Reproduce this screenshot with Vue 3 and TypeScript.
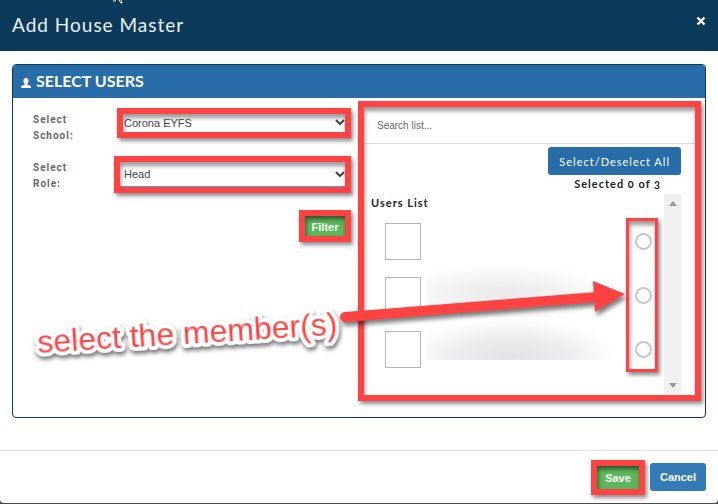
<script setup lang="ts">
import { ref } from 'vue'

const school = ref('Corona EYFS')
const role = ref('Head')
const search = ref('')
const members = [1, 2, 3]
const picked = ref<number[]>([])

function toggleAll(): void {
  picked.value = picked.value.length === members.length ? [] : [...members]
}
</script>

<template>
  <div class="dialog">
    <header class="dialog-header">
      <h1>Add House Master</h1>
      <button class="close" type="button" aria-label="Close">
        <svg viewBox="0 0 10 10" width="10" height="10"><path d="M1.5 1.5 8.5 8.5M8.5 1.5 1.5 8.5" /></svg>
      </button>
      <svg class="pointer" viewBox="0 0 12 4" width="12" height="4">
        <path d="M1 0v2l2-2M6 0l2 3h1L8 0" />
      </svg>
    </header>

    <main class="dialog-body">
      <section class="panel">
        <h2 class="panel-heading">
          <svg viewBox="0 0 10 10" width="10" height="10">
            <path d="M5 0C3.4 0 2.500 1.100 2.500 2.700 2.500 4 3 5 3.700 5.600V6.700C2 7.200 0 7.700 0 9V10H10V9C10 7.700 8 7.200 6.300 6.700V5.600C7 5 7.500 4 7.500 2.700 7.500 1.100 6.600 0 5 0Z" />
          </svg>
          SELECT USERS
        </h2>
        <div class="panel-body">
          <form class="filters" @submit.prevent>
            <div class="field school">
              <label for="school">Select School:</label>
              <div class="mark">
                <select id="school" v-model="school"><option>Corona EYFS</option></select>
                <svg class="chevron" viewBox="0 0 10 7" width="10" height="7"><path d="M1 1 5 5 9 1" /></svg>
              </div>
            </div>
            <div class="field role">
              <label for="role">Select Role:</label>
              <div class="mark">
                <select id="role" v-model="role"><option>Head</option></select>
                <svg class="chevron" viewBox="0 0 10 7" width="10" height="7"><path d="M1 1 5 5 9 1" /></svg>
              </div>
            </div>
            <div class="mark filter-mark"><button class="green" type="submit">Filter</button></div>
          </form>

          <div class="mark users">
            <input v-model="search" class="search" type="text" placeholder="Search list..." aria-label="Search list" />
            <div class="summary">
              <button class="select-all" type="button" @click="toggleAll">Select/Deselect All</button>
              <p>Selected {{ picked.length }} of {{ members.length }}</p>
            </div>
            <div class="list">
              <div class="list-main">
                <h3>Users List</h3>
                <ul>
                  <li v-for="m in members" :key="m">
                    <span class="avatar"></span>
                    <input v-model="picked" type="checkbox" :value="m" :aria-label="`Member ${m}`" />
                  </li>
                </ul>
                <div class="haze upper"></div>
                <div class="haze lower"></div>
                <div class="mark thin"></div>
              </div>
              <div class="scrollbar">
                <svg viewBox="0 0 8 5" width="8" height="5"><path d="M0 5 4 0 8 5Z" /></svg>
                <svg viewBox="0 0 8 5" width="8" height="5"><path d="M0 0 4 5 8 0Z" /></svg>
              </div>
            </div>
          </div>
        </div>
        <svg class="callout" viewBox="0 0 640 120" width="640" height="120">
          <g class="arrow">
            <path class="shaft" d="M333 52 585 32" />
            <path class="head" d="M581 16 613 29 583 47Z" />
          </g>
          <text x="26" y="88" transform="rotate(-3.500 26 88)">select the member(s)</text>
        </svg>
      </section>
    </main>

    <footer class="dialog-footer">
      <div class="mark save-mark"><button class="green" type="button">Save</button></div>
      <button class="cancel" type="button">Cancel</button>
    </footer>
  </div>
</template>

<style>
body {
  background: #4a484a;
}
</style>

<style scoped>
* {
  box-sizing: border-box;
}
.dialog {
  background: #fff;
  border-radius: 0 0 4px 4px;
  font-family: Lato, sans-serif;
  color: #222;
  overflow: hidden;
}
h1, h2, h3, p, ul {
  margin: 0;
  padding: 0;
}
button, select, input {
  font-family: inherit;
  margin: 0;
}
button {
  border: 0;
  padding: 0;
}
.dialog-header {
  position: relative;
  display: flex;
  justify-content: space-between;
  height: 51px;
  padding: 0 12px;
  background: #0b3a5b;
  color: #edf1f5;
}
h1 {
  font-size: 19px;
  font-weight: 400;
  line-height: 50px;
  letter-spacing: 1px;
}
.close {
  align-self: flex-start;
  margin-top: 16px;
  height: 10px;
  background: none;
  line-height: 0;
}
.close path {
  stroke: #fff;
  stroke-width: 2.400;
}
.pointer {
  position: absolute;
  left: 113px;
  top: 0;
}
.pointer path {
  fill: #111;
  stroke: #fff;
  stroke-width: 1;
}
.dialog-body {
  padding: 13px 12px 32px;
}
.panel {
  position: relative;
  border: 1px solid #0b3a5b;
  border-radius: 4px;
}
.panel-heading {
  display: flex;
  align-items: center;
  gap: 5px;
  height: 33px;
  padding: 0 8px 2px;
  border-radius: 3px 3px 0 0;
  background: #286ca8;
  color: #fff;
  font-size: 16px;
  font-weight: 700;
}
.panel-heading svg {
  margin-top: 4px;
  fill: #fff;
}
.panel-body {
  display: grid;
  grid-template-columns: 1fr 1fr;
  padding: 3px 2px 16px 0;
}
.mark {
  position: relative;
  border: 6px solid #ff4343;
  box-shadow: 2px 3px 4px rgba(0, 0, 0, 0.45);
}
.mark::after {
  content: "";
  position: absolute;
  inset: 0;
  box-shadow: inset 1px 4px 4px rgba(0, 0, 0, 0.4);
  pointer-events: none;
}
.filters {
  padding: 7px 7px 0 20px;
}
.field {
  display: grid;
  grid-template-columns: 84px 1fr;
  align-items: start;
  margin-bottom: 12px;
}
.field.role {
  grid-template-columns: 81px 1fr;
  margin-bottom: 17px;
}
label {
  width: 60px;
  padding-top: 4px;
  font: 700 10px/16px Roboto, sans-serif;
  letter-spacing: 1px;
  color: #666;
}
select {
  display: block;
  width: 100%;
  height: 18px;
  padding: 0 1px;
  border: 0;
  outline: 0;
  appearance: none;
  background: #fff;
  font: 11px "Liberation Sans", sans-serif;
  color: #444;
}
.role select {
  height: 25px;
  padding-left: 4px;
  border-bottom: 1px solid #5b9bd5;
}
.chevron {
  position: absolute;
  right: 0;
  top: 50%;
  margin-top: -4px;
}
.chevron path {
  fill: none;
  stroke: #444;
  stroke-width: 2;
}
.filter-mark {
  width: 52px;
  margin-left: auto;
}
.green {
  display: block;
  width: 100%;
  height: 20px;
  padding-top: 2px;
  background: #5cb85c;
  color: #fff;
  font: 700 11px "Liberation Sans", sans-serif;
}
.filter-mark::after, .save-mark::after {
  box-shadow: inset 1px 3px 4px rgba(0, 0, 0, 0.55);
}
.users {
  margin-right: 2px;
  min-height: 300px;
}
.search {
  display: block;
  width: 100%;
  height: 37px;
  padding: 0 13px;
  border: 0;
  border-bottom: 1px solid #ddd;
  outline: 0;
  font: 10px "Liberation Sans", sans-serif;
}
.search::placeholder {
  color: #666;
}
.summary {
  display: flex;
  flex-direction: column;
  align-items: flex-end;
  padding: 3px 14px 0 0;
}
.select-all {
  height: 28px;
  padding: 0 11px;
  border-radius: 3px;
  background: #286ca8;
  color: #fff;
  font-size: 11px;
  letter-spacing: 1px;
}
.summary p {
  padding-right: 20px;
  font-size: 11px;
  font-weight: 700;
  line-height: 18px;
  height: 19px;
  letter-spacing: 1px;
  font-variant-numeric: oldstyle-nums;
}
.list {
  display: flex;
  height: 201px;
  padding-right: 14px;
}
.list-main {
  position: relative;
  flex: 1;
}
h3 {
  padding-left: 7px;
  font-size: 11px;
  line-height: 18px;
  letter-spacing: 1px;
}
ul {
  list-style: none;
  display: grid;
  gap: 18px;
  padding: 11px 12px 0 21px;
}
li {
  display: flex;
  justify-content: space-between;
  align-items: center;
  height: 36px;
}
.avatar {
  width: 36px;
  height: 37px;
  border: 1px solid #b5b5b5;
}
li input {
  appearance: none;
  width: 17px;
  height: 17px;
  border: 2px solid #c5c7cf;
  border-radius: 50%;
  background: #fff;
}
li input:checked {
  background: #286ca8;
}
.haze {
  position: absolute;
  left: 63px;
  right: 50px;
}
.haze.upper {
  top: 66px;
  height: 58px;
  background: radial-gradient(ellipse 62% 50% at 40% 56%, #e9e9eb 0%, #f3f3f4 50%, rgba(255, 255, 255, 0) 100%);
}
.haze.lower {
  top: 124px;
  height: 42px;
  background: radial-gradient(ellipse 58% 95% at 45% 95%, #e3e3e5 0%, #ececee 50%, rgba(255, 255, 255, 0) 100%);
}
.mark.thin {
  position: absolute;
  top: 24px;
  right: 6px;
  width: 32px;
  height: 154px;
  border-width: 3px;
  pointer-events: none;
}
.scrollbar {
  display: flex;
  flex-direction: column;
  justify-content: space-between;
  align-items: center;
  width: 17px;
  padding: 7px 0;
  background: #f0f0f0;
}
.scrollbar path {
  fill: #999;
}
.callout {
  position: absolute;
  left: -1px;
  top: 200px;
  pointer-events: none;
  overflow: visible;
}
.arrow {
  filter: drop-shadow(2px 4px 2px rgba(0, 0, 0, 0.5));
}
.shaft {
  stroke: #ff4343;
  stroke-width: 10;
  stroke-linecap: round;
}
.head {
  fill: #ff4343;
}
.callout text {
  font: 32px "Liberation Sans", sans-serif;
  fill: #ff4343;
  stroke: #fff;
  stroke-width: 8;
  stroke-linejoin: round;
  paint-order: stroke;
  filter: drop-shadow(1px 3px 2px rgba(0, 0, 0, 0.55));
}
.dialog-footer {
  display: flex;
  justify-content: flex-end;
  align-items: flex-start;
  gap: 5px;
  padding: 9px 12px 8px;
  border-top: 1px solid #e2e2e2;
}
.save-mark {
  width: 54px;
}
.save-mark .green {
  height: 23px;
  padding-top: 0;
}
.cancel {
  width: 56px;
  height: 28px;
  margin-top: 3px;
  border-radius: 3px;
  background: #337ab7;
  color: #fff;
  font: 700 11px "Liberation Sans", sans-serif;
}
</style>
